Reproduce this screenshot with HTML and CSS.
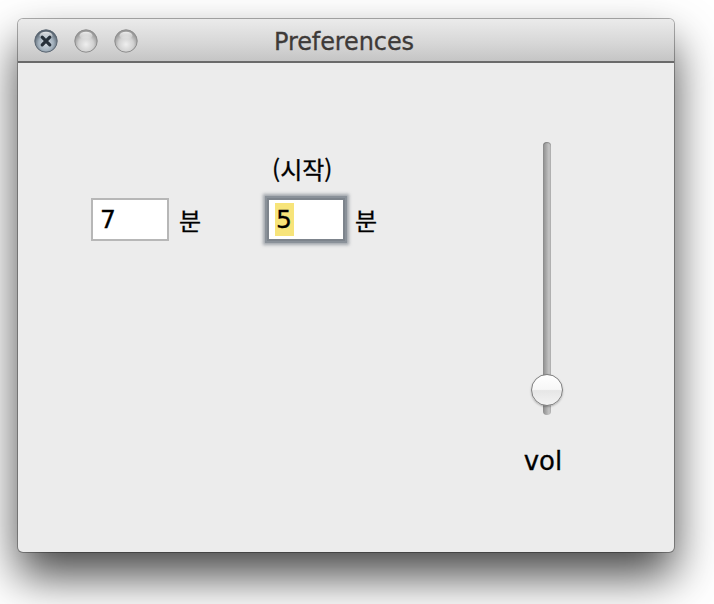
FILE: index.html
```html
<!DOCTYPE html>
<html lang="ko">
<head>
<meta charset="utf-8">
<title>Preferences</title>
<link rel="stylesheet" href="styles.css">
</head>
<body>
<div class="window">
  <div class="titlebar">
    <div class="lights">
      <svg class="light" width="24" height="24" viewBox="0 0 24 24">
        <defs>
          <radialGradient id="gc" cx="50%" cy="60%" r="55%">
            <stop offset="0" stop-color="#d5dde4"/>
            <stop offset="0.6" stop-color="#a3b1bd"/>
            <stop offset="1" stop-color="#56626e"/>
          </radialGradient>
          <linearGradient id="hl" x1="0" y1="0" x2="0" y2="1">
            <stop offset="0" stop-color="#ffffff" stop-opacity="0.85"/>
            <stop offset="1" stop-color="#ffffff" stop-opacity="0"/>
          </linearGradient>
        </defs>
        <circle cx="12" cy="12" r="11.2" fill="url(#gc)" stroke="#5d6874" stroke-width="1"/>
        <ellipse cx="12" cy="6.5" rx="6.5" ry="3.8" fill="url(#hl)"/>
        <path d="M8.2 8.2 L15.8 15.8 M15.8 8.2 L8.2 15.8" stroke="#26303a" stroke-width="3.2" stroke-linecap="round"/>
      </svg>
      <svg class="light" width="24" height="24" viewBox="0 0 24 24">
        <defs>
          <radialGradient id="gg" cx="50%" cy="65%" r="55%">
            <stop offset="0" stop-color="#efefef"/>
            <stop offset="0.6" stop-color="#d2d2d2"/>
            <stop offset="1" stop-color="#9a9a9a"/>
          </radialGradient>
        </defs>
        <circle cx="12" cy="12" r="11.2" fill="url(#gg)" stroke="#8e8e8e" stroke-width="1"/>
        <ellipse cx="12" cy="6.5" rx="6.5" ry="3.8" fill="url(#hl)"/>
      </svg>
      <svg class="light" width="24" height="24" viewBox="0 0 24 24">
        <circle cx="12" cy="12" r="11.2" fill="url(#gg)" stroke="#8e8e8e" stroke-width="1"/>
        <ellipse cx="12" cy="6.5" rx="6.5" ry="3.8" fill="url(#hl)"/>
      </svg>
    </div>
    <div class="title">Preferences</div>
    <div></div>
  </div>
  <div class="content">
    <div class="fields">
      <div class="group">
        <div class="field"><span class="val">7</span></div>
        <span class="unit">분</span>
      </div>
      <div class="group-col">
        <div class="caption">(시작)</div>
        <div class="group">
          <div class="field focused"><span class="val sel">5</span></div>
          <span class="unit">분</span>
        </div>
      </div>
    </div>
    <div class="slider-col">
      <div class="slider">
        <div class="track"></div>
        <div class="knob"></div>
      </div>
      <div class="vol">vol</div>
    </div>
  </div>
</div>
</body>
</html>
```

FILE: styles.css
```css
html, body {
  margin: 0;
  padding: 0;
}
body {
  background: #ffffff;
  width: 714px;
  height: 604px;
  overflow: hidden;
  padding: 19px 0 0 18px;
  box-sizing: border-box;
  font-family: "DejaVu Sans", "Noto Sans CJK KR", sans-serif;
}
.window {
  width: 656px;
  height: 533px;
  border-radius: 5px;
  background: #ececec;
  box-shadow: 0 0 0 1px rgba(0,0,0,0.3), 0 24px 46px rgba(0,0,0,0.72);
  display: flex;
  flex-direction: column;
  overflow: hidden;
}
.titlebar {
  height: 42px;
  flex: none;
  background: linear-gradient(#ebebeb, #d6d6d6 60%, #c5c5c5);
  border-bottom: 2px solid #6a6a6a;
  display: grid;
  grid-template-columns: 1fr auto 1fr;
  align-items: center;
}
.lights {
  display: flex;
  gap: 16px;
  padding-left: 16px;
  padding-top: 1px;
}
.light {
  display: block;
}
.title {
  font-size: 24px;
  color: #3e3a38;
  letter-spacing: -0.1px;
  padding-top: 4px;
  padding-right: 4px;
  -webkit-text-stroke: 0.3px #3e3a38;
}
.content {
  flex: 1;
  display: flex;
  align-items: flex-start;
  padding: 0 101px 0 73px;
}
.fields {
  display: flex;
  align-items: flex-end;
  margin-top: 92px;
}
.group {
  display: flex;
  align-items: center;
  gap: 10px;
}
.group-col {
  display: flex;
  flex-direction: column;
  margin-left: 66px;
}
.caption {
  font-size: 24px;
  line-height: 28px;
  padding-left: 5px;
  margin-bottom: 15px;
  color: #000;
  font-family: "Noto Sans CJK KR", sans-serif;
  -webkit-text-stroke: 0.3px #000;
}
.field {
  width: 78px;
  height: 43px;
  box-sizing: border-box;
  background: #fff;
  border: 2px solid #b7b7b7;
  display: flex;
  align-items: center;
  padding-left: 6px;
}
.field.focused {
  border: 2px solid #7d848c;
  box-shadow: 0 0 0 2px #8a9199, 0 0 3px 4px rgba(110,118,128,0.6);
}
.val {
  font-size: 25px;
  line-height: 33px;
  color: #000;
  padding: 0 1px;
  -webkit-text-stroke: 0.3px #000;
}
.val.sel {
  background: #f7e47a;
  padding: 0 2px 0 1px;
}
.unit {
  font-size: 24px;
  color: #000;
  font-family: "Noto Sans CJK KR", sans-serif;
  line-height: 28px;
  -webkit-text-stroke: 0.3px #000;
}
.slider-col {
  margin-left: auto;
  margin-top: 79px;
  width: 60px;
  display: flex;
  flex-direction: column;
  align-items: center;
}
.slider {
  position: relative;
  width: 32px;
  height: 273px;
  display: flex;
  justify-content: center;
  margin-left: 8px;
}
.track {
  width: 8px;
  height: 100%;
  border-radius: 4px;
  background: linear-gradient(90deg, #8d8d8d, #a9a9a9 40%, #c4c4c4 75%, #b0b0b0);
  box-shadow: inset 0 1px 1px rgba(0,0,0,0.25);
}
.knob {
  position: absolute;
  top: 232px;
  left: 0;
  width: 32px;
  height: 32px;
  box-sizing: border-box;
  border-radius: 50%;
  border: 1px solid #7e7e7e;
  background: linear-gradient(#ffffff, #f7f7f7 48%, #e6e6e6 52%, #f3f3f3);
  box-shadow: 0 1px 2px rgba(0,0,0,0.25);
}
.vol {
  font-size: 26px;
  line-height: 28px;
  margin-top: 32px;
  color: #000;
  -webkit-text-stroke: 0.3px #000;
}
```
